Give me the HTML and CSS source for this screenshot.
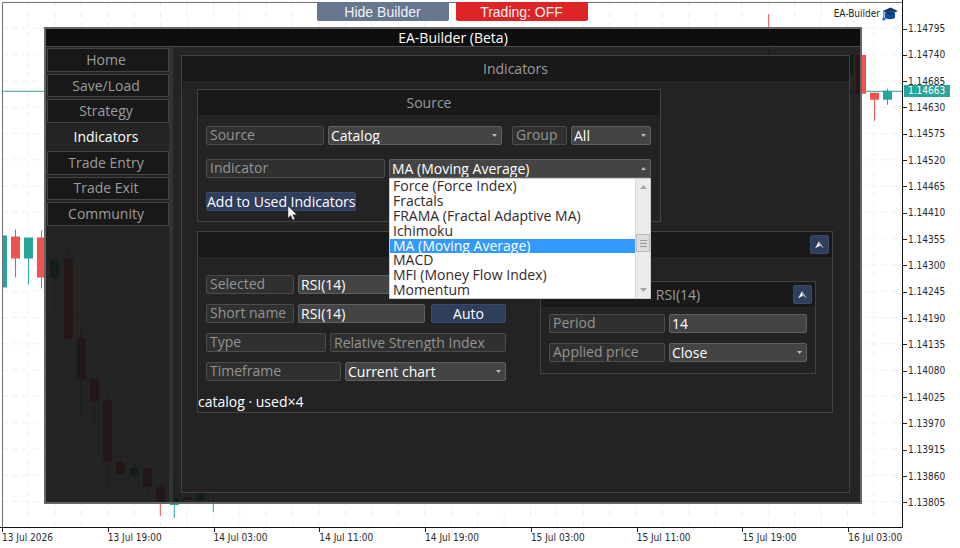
FILE: index.html
```html
<!DOCTYPE html>
<html lang="en">
<head>
<meta charset="utf-8">
<title>EA-Builder (Beta)</title>
<link rel="stylesheet" href="styles.css">
</head>
<body>
<div class="terminal">
  <main class="plot">
    <svg class="chart" viewBox="0 0 903 528" preserveAspectRatio="none" aria-hidden="true">
      <defs>
        <pattern id="vgrid" x="28" y="2" width="26.45" height="10" patternUnits="userSpaceOnUse"><path d="M.5 0v5" stroke="#ededf0"/></pattern>
        <pattern id="hgrid" x="2" y="28" width="10" height="26.33" patternUnits="userSpaceOnUse"><path d="M0 .5h6" stroke="#efeff2"/></pattern>
      </defs>
      <rect x="2" y="2" width="900" height="526" fill="url(#vgrid)"/>
      <rect x="2" y="28" width="900" height="500" fill="url(#hgrid)"/>
      <path d="M2.500 528V2.500H903" fill="none" stroke="#6e6e6e"/>
      <path d="M2 91.500H903" stroke="#3c9c94"/>
      <g fill="#26a69a">
        <path d="M3 236h4v52h-4zM24 238h9v21h-9zM28 258h1v27h-1zM50 260h9v18h-9zM54 278h1v34h-1zM130 469h9v7h-9zM134 462h1v18h-1zM170 499h9v7h-9zM174 478h1v41h-1zM196 494h9v7h-9zM200 500h1v5h-1zM213 480h1v33h-1zM850 55h4v20h-4zM884 91h9v9h-9zM888 89h1v16h-1z"/>
      </g>
      <g fill="#ef5350">
        <path d="M11 237h9v22h-9zM15 230h1v48h-1zM37 238h9v40h-9zM41 231h1v58h-1zM64 259h9v81h-9zM68 248h1v11h-1zM77 339h9v41h-9zM81 328h1v89h-1zM90 379h9v23h-9zM94 400h1v25h-1zM103 401h9v62h-9zM107 395h1v97h-1zM116 463h9v12h-9zM120 454h1v10h-1zM143 469h9v19h-9zM147 466h1v30h-1zM156 488h9v17h-9zM160 483h1v34h-1zM183 498h9v3h-9zM769 14h1v40h-1zM857 55h10v39h-10zM861 94h1v3h-1zM871 93h9v7h-9zM875 94h1v27h-1z"/>
      </g>
    </svg>

    <div class="actions">
      <button class="action action-hide" type="button">Hide Builder</button>
      <button class="action action-trading" type="button">Trading: OFF</button>
    </div>
    <div class="expert">
      <span>EA-Builder</span>
      <svg width="16" height="14" viewBox="0 0 16 14" aria-hidden="true">
        <path d="M3 6v5q5 2.600 10 0V6z" fill="#0b4f9c"/>
        <path d="M8.500.5 15.800 4 8 8 .8 4z" fill="#12355e"/>
        <path d="M5 3.500 9 5l4-1" fill="none" stroke="#2b6cb8" stroke-width=".8"/>
        <path d="M1.800 4.500v7" stroke="#2878f0" stroke-width="1.200"/>
        <circle cx="1.900" cy="12" r="1.600" fill="#2563eb"/>
      </svg>
    </div>

    <section class="window" aria-labelledby="title">
      <h1 class="titlebar" id="title">EA-Builder (Beta)</h1>
      <div class="workspace">
        <div class="sidebar">
          <nav class="tabs">
            <button class="tab" type="button">Home</button>
            <button class="tab" type="button">Save/Load</button>
            <button class="tab" type="button">Strategy</button>
            <button class="tab tab-active" type="button" aria-current="page">Indicators</button>
            <button class="tab" type="button">Trade Entry</button>
            <button class="tab" type="button">Trade Exit</button>
            <button class="tab" type="button">Community</button>
          </nav>
        </div>

        <div class="page box">
          <h2 class="heading">Indicators</h2>
          <div class="page-body">
            <section class="box source">
              <h3 class="heading">Source</h3>
              <form class="form form-source">
                <div class="row">
                  <label class="label w-source" for="source">Source</label>
                  <select class="control grow" id="source"><option>Catalog</option></select>
                  <label class="label w-group" for="group">Group</label>
                  <select class="control w-all" id="group"><option>All</option></select>
                </div>
                <div class="row">
                  <label class="label w-indicator" for="indicator">Indicator</label>
                  <div class="combo">
                    <select class="control control-open" id="indicator"><option>MA (Moving Average)</option></select>
                    <div class="menu">
                      <ul class="options" role="listbox" aria-label="Indicator">
                        <li role="option">Force (Force Index)</li>
                        <li role="option">Fractals</li>
                        <li role="option">FRAMA (Fractal Adaptive MA)</li>
                        <li role="option">Ichimoku</li>
                        <li role="option" class="chosen" aria-selected="true">MA (Moving Average)</li>
                        <li role="option">MACD</li>
                        <li role="option">MFI (Money Flow Index)</li>
                        <li role="option">Momentum</li>
                      </ul>
                      <div class="scroll" aria-hidden="true">
                        <svg width="7" height="4" viewBox="0 0 7 4"><path d="M0 4 3.500 0 7 4z" fill="#a4a4a8"/></svg>
                        <span class="thumb"></span>
                        <svg width="7" height="4" viewBox="0 0 7 4"><path d="M0 0 3.500 4 7 0z" fill="#a4a4a8"/></svg>
                      </div>
                    </div>
                  </div>
                </div>
                <div class="row">
                  <button class="blue w-add" type="button">Add to Used Indicators
                    <svg class="cursor" width="11" height="16" viewBox="0 0 11 16" aria-hidden="true"><path d="M1 1v12l2.800-2.500 2 4.500 2-.9-2-4.400H9.800z" fill="#fff" stroke="#333" stroke-width=".5"/></svg>
                  </button>
                </div>
              </form>
            </section>

            <section class="box used">
              <div class="heading">
                <button class="blue toggle" type="button" aria-label="Collapse used indicators"><svg width="9" height="8" viewBox="0 0 12 11" aria-hidden="true"><path d="M5.500 0 6.500 6.500 0 10z" fill="#fff"/><path d="M6 1 12 10 7 7z" fill="#a9b0ba"/></svg></button>
              </div>
              <div class="used-body">
                <form class="form form-used">
                  <div class="row">
                    <label class="label w-name" for="selected">Selected</label>
                    <select class="control grow" id="selected"><option>RSI(14)</option></select>
                  </div>
                  <div class="row">
                    <label class="label w-name" for="short">Short name</label>
                    <input class="control grow" id="short" value="RSI(14)">
                    <button class="blue w-auto" type="button">Auto</button>
                  </div>
                  <div class="row">
                    <label class="label w-type" for="type">Type</label>
                    <input class="label grow" id="type" value="Relative Strength Index" readonly>
                  </div>
                  <div class="row">
                    <label class="label w-time" for="timeframe">Timeframe</label>
                    <select class="control grow" id="timeframe"><option>Current chart</option></select>
                  </div>
                </form>
                <section class="box params">
                  <h3 class="heading">RSI(14)
                    <button class="blue toggle" type="button" aria-label="Collapse RSI(14)"><svg width="9" height="8" viewBox="0 0 12 11" aria-hidden="true"><path d="M5.500 0 6.500 6.500 0 10z" fill="#fff"/><path d="M6 1 12 10 7 7z" fill="#a9b0ba"/></svg></button>
                  </h3>
                  <form class="form form-params">
                    <div class="row">
                      <label class="label w-param" for="period">Period</label>
                      <input class="control grow" id="period" value="14">
                    </div>
                    <div class="row">
                      <label class="label w-param" for="price">Applied price</label>
                      <select class="control grow" id="price"><option>Close</option></select>
                    </div>
                  </form>
                </section>
              </div>
              <p class="status">catalog · used×4</p>
            </section>
          </div>
        </div>
      </div>
    </section>
  </main>

  <aside class="prices">
    <ol class="price-list">
      <li>1.14795</li><li>1.14740</li><li>1.14685</li><li>1.14630</li><li>1.14575</li><li>1.14520</li><li>1.14465</li><li>1.14410</li><li>1.14355</li><li>1.14300</li><li>1.14245</li><li>1.14190</li><li>1.14135</li><li>1.14080</li><li>1.14025</li><li>1.13970</li><li>1.13915</li><li>1.13860</li><li>1.13805</li>
    </ol>
    <span class="price-now">1.14663</span>
  </aside>

  <ol class="times">
    <li>13 Jul 2026</li><li>13 Jul 19:00</li><li>14 Jul 03:00</li><li>14 Jul 11:00</li><li>14 Jul 19:00</li><li>15 Jul 03:00</li><li>15 Jul 11:00</li><li>15 Jul 19:00</li><li>16 Jul 03:00</li>
  </ol>
</div>
</body>
</html>
```
FILE: styles.css
```css
* { box-sizing: border-box; }

body {
  margin: 0;
  background: #fff;
  color: #fff;
  font: 14px/17px "Open Sans", "Noto Sans", sans-serif;
}

h1, h2, h3, p, ol, ul { margin: 0; padding: 0; font: inherit; list-style: none; }

button, input, select { font: inherit; color: inherit; margin: 0; }

/* Chart frame */
.terminal {
  display: grid;
  grid-template: minmax(528px, 1fr) 20px / 1fr 57px;
  min-height: 100vh;
}

.plot { position: relative; border-right: 1px solid #111; border-bottom: 1px solid #111; }

.chart { position: absolute; width: 100%; height: 100%; }

.prices {
  position: relative;
  padding: 21px 0 17px;
  color: #2a2a2e;
  font: 10px/16px "DejaVu Sans Condensed", "DejaVu Sans", sans-serif;
}

.price-list { display: flex; flex-direction: column; justify-content: space-between; height: 100%; }
.price-list li { display: flex; align-items: center; gap: 1px; }
.price-list li::before { content: ""; width: 4px; height: 1px; background: #222; }

.price-now {
  position: absolute;
  top: 85px;
  left: 1px;
  width: 46px;
  padding-left: 4px;
  background: #26a69a;
  color: #fff;
  line-height: 12px;
}

.times {
  grid-column: 1 / -1;
  display: grid;
  grid-template-columns: repeat(9, 1fr);
  padding: 0 6px 0 2px;
  color: #2a2a2e;
  font: 10px/12px "DejaVu Sans Condensed", "DejaVu Sans", sans-serif;
  white-space: nowrap;
}
.times li::before { content: ""; display: block; width: 1px; height: 4px; background: #222; }

/* Chart buttons and expert name */
.actions { position: relative; display: flex; justify-content: center; gap: 7px; padding: 2px 0 0 2px; }

.action {
  width: 132px;
  height: 19px;
  padding: 0;
  border: 0;
  border-radius: 0 0 2px 2px;
  color: #f0f2f6;
  font: 14px/18px "Liberation Sans", Arial, sans-serif;
}
.action-hide { background: #66768f; }
.action-trading { background: #de2424; }

.expert {
  position: absolute;
  top: 6px;
  right: 4px;
  display: flex;
  align-items: center;
  gap: 2px;
  color: #222;
  font: 10px/15px "DejaVu Sans Condensed", "DejaVu Sans", sans-serif;
}

/* Builder window */
.window {
  position: absolute;
  inset: 27px 40px 23px 44px;
  display: flex;
  flex-direction: column;
  border: 2px solid #666;
  background: rgb(17 17 17 / .92);
}

.titlebar { height: 18px; background: #0e0e0e; border-bottom: 1px solid #4a4a4a; text-align: center; }

.workspace { flex: 1; display: flex; }

.sidebar {
  flex: none;
  width: 127px;
  padding: 1px 0 0 1px;
  border-right: 4px solid #333;
}

.tabs { display: grid; grid-auto-rows: 1fr; gap: 2px; height: 178px; }

.tab {
  padding: 0 4px 0 0;
  border: 1px solid #444;
  background: #181818;
  color: #9c9c9c;
  line-height: 16px;
}
.tab-active { border-color: transparent; background: none; color: #fff; }

.box { border: 1px solid #424242; background: #232323; }

.page { flex: 1; min-width: 0; margin: 8px 10px 9px 8px; }
.page-body { display: flex; flex-direction: column; gap: 9px; padding: 8px 16px 8px 15px; }

.heading {
  position: relative;
  height: 25px;
  background: #191919;
  color: #9c9c9c;
  line-height: 25px;
  text-align: center;
}

.source { width: 464px; }

.form { display: flex; flex-direction: column; }
.form-source { gap: 14px; padding: 11px 9px 10px 8px; }
.form-used { gap: 10px; }
.form-params { gap: 10px; padding: 7px 8px 11px; }

.row { display: flex; gap: 4px; }

.label, .control, .blue {
  height: 19px;
  border-radius: 2px;
  line-height: 16px;
}

.label { padding: 0 3px; border: 1px solid #4c4c4c; background: #303030; color: #949494; }

.control {
  min-width: 0;
  padding: 0 2px;
  border: 1px solid #606060;
  background: #444;
  color: #fff;
}

select.control {
  appearance: none;
  background: #444 url("data:image/svg+xml,%3Csvg xmlns='http://www.w3.org/2000/svg' width='5' height='3'%3E%3Cpath d='M0 0h5L2.500 3z' fill='%23bbb'/%3E%3C/svg%3E") no-repeat right 4px center;
}
select.control-open {
  width: 100%;
  background-image: url("data:image/svg+xml,%3Csvg xmlns='http://www.w3.org/2000/svg' width='5' height='3'%3E%3Cpath d='M0 3h5L2.500 0z' fill='%23bbb'/%3E%3C/svg%3E");
}

.blue { padding: 0; border: 1px solid #3b4a66; background: #2f3e5a; color: #fff; }

.grow { flex: 1; min-width: 0; }
.w-source { width: 118px; }
.w-group { width: 55px; margin-left: 6px; }
.w-all { width: 80px; }
.w-indicator { width: 179px; }
.w-add { position: relative; width: 150px; white-space: nowrap; }
.w-name { width: 88px; }
.w-auto { width: 75px; margin-left: 2px; }
.w-type { width: 120px; }
.w-time { width: 135px; }
.w-param { width: 116px; }

.cursor { position: absolute; left: 80px; top: 12px; z-index: 1; }

.combo { position: relative; flex: 1; }

.menu {
  position: absolute;
  z-index: 2;
  top: 19px;
  left: 0;
  right: 0;
  display: flex;
  border: 1px solid #ccc;
  background: #fff;
}

.options { flex: 1; display: grid; grid-auto-rows: 1fr; height: 119px; color: #33292a; line-height: 14px; }
.options li { padding-left: 3px; }
.options .chosen { background: #39f; color: #fff; }

.scroll {
  display: flex;
  flex-direction: column;
  align-items: center;
  width: 15px;
  padding: 6px 0;
  border-left: 1px solid #d8d8dc;
  background: #ececee;
}
.thumb {
  width: 14px;
  height: 18px;
  margin: 45px 0 auto;
  border: 1px solid #bcbcbc;
  background: repeating-linear-gradient(#999 0 1px, #ddd 1px 3px) center / 7px 7px no-repeat #ddd;
}

.used-body { display: grid; grid-template-columns: 300px minmax(0, 1fr); gap: 34px; padding: 18px 16px 0 8px; }

.params { margin-top: 6px; align-self: start; }

.toggle {
  position: absolute;
  top: 3px;
  right: 3px;
  display: grid;
  place-items: center;
  width: 19px;
  height: 19px;
}

.status { padding: 12px 0 2px; line-height: 17px; }
```
